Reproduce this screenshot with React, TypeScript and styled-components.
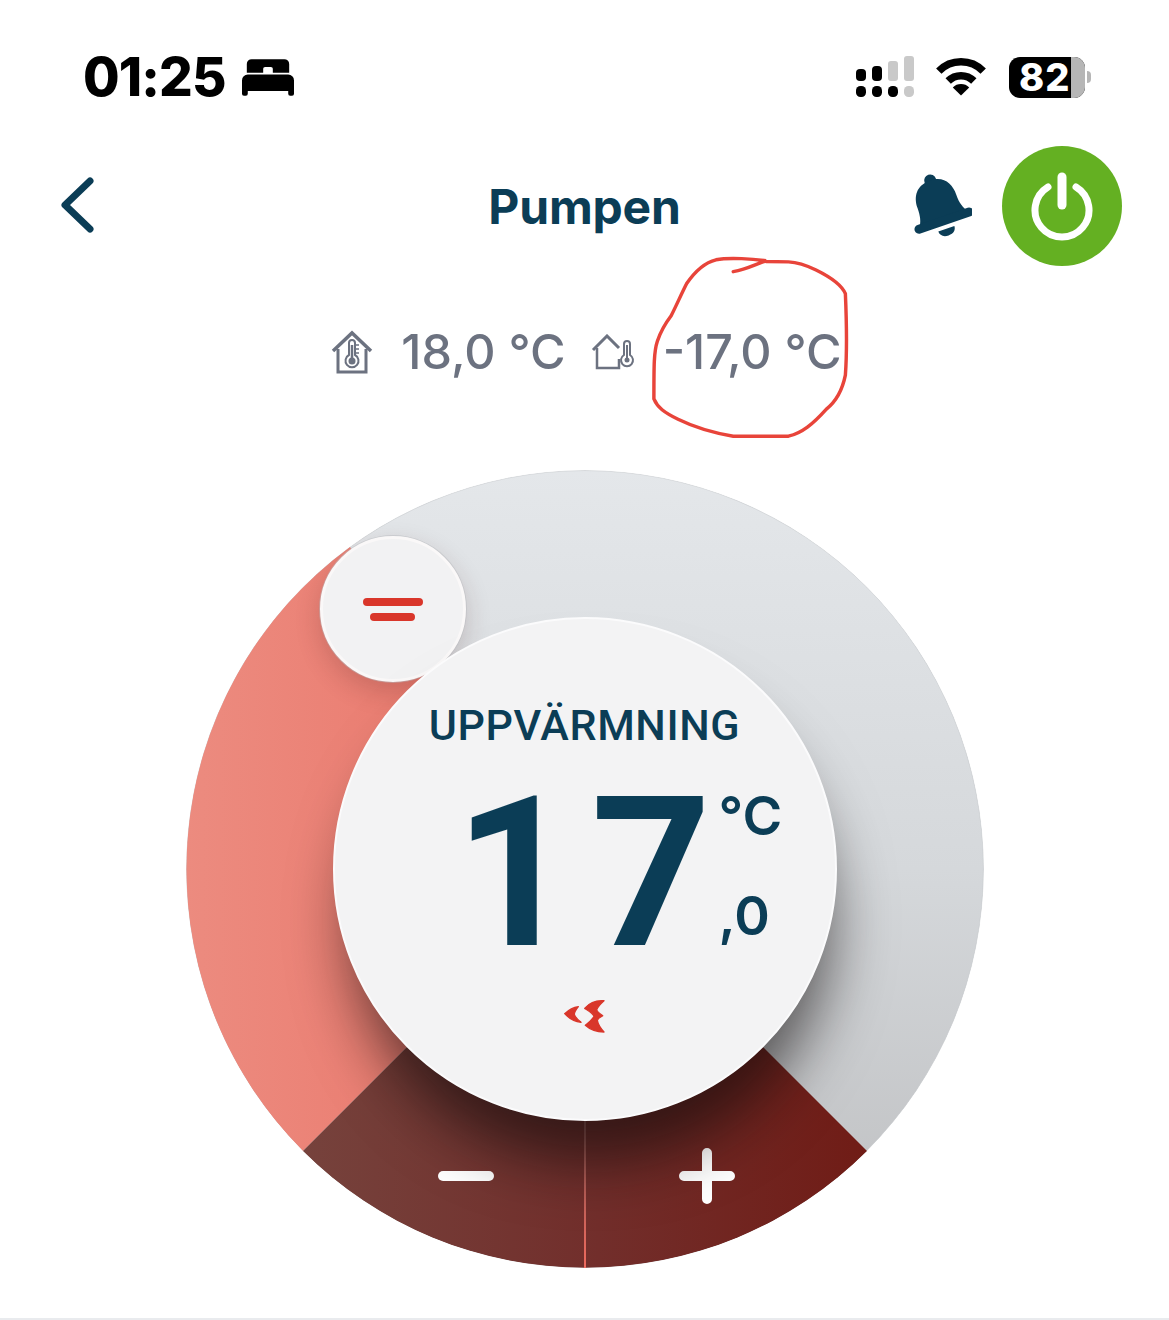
import React from "react";
import styled, { createGlobalStyle } from "styled-components";

const NAVY = "#0b3d56";
const GREY = "#6c7280";
const RED = "#d9362a";

const GlobalStyle = createGlobalStyle`
  html, body { margin: 0; padding: 0; background: #fff; }
  body { font-family: "Inter", "Liberation Sans", sans-serif; }
`;

const Page = styled.div`
  width: 1169px;
  height: 1320px;
  overflow: hidden;
  box-sizing: border-box;
  background: #fff;
  border-bottom: 2px solid #e9ebee;
  display: flex;
  flex-direction: column;
`;

const StatusBar = styled.div`
  height: 146px;
  box-sizing: border-box;
  padding: 46px 78px 0 83px;
  display: flex;
  justify-content: space-between;
  align-items: flex-start;
`;

const TimeGroup = styled.div`
  display: flex;
  align-items: center;
  gap: 16px;
  height: 62px;
`;

const Time = styled.span`
  font-size: 53px;
  font-weight: 800;
  color: #000;
  letter-spacing: -0.9px;
  line-height: 62px;
`;

const Indicators = styled.div`
  display: flex;
  align-items: center;
  gap: 22px;
  height: 62px;
`;

const Battery = styled.div`
  position: relative;
  width: 76px;
  height: 41px;
  border-radius: 11px;
  background: #000;
  display: flex;
  align-items: center;
  padding-left: 10px;
  box-sizing: border-box;
  font-size: 38px;
  font-weight: 800;
  color: #fff;
  letter-spacing: 1px;
`;

const BatteryRest = styled.div`
  position: absolute;
  right: 0;
  top: 0;
  bottom: 0;
  width: 14px;
  background: #b6b6b6;
  border-radius: 0 11px 11px 0;
`;

const BatteryWrap = styled.div`
  display: flex;
  align-items: center;
  gap: 2px;
  margin-left: 1px;
`;

const BatteryTip = styled.div`
  width: 4px;
  height: 12px;
  background: #b6b6b6;
  border-radius: 0 6px 6px 0;
`;

const Header = styled.div`
  height: 120px;
  box-sizing: border-box;
  padding: 0 47px;
  display: grid;
  grid-template-columns: minmax(0, 1fr) auto minmax(0, 1fr);
  align-items: center;
`;

const BackSlot = styled.div`
  display: flex;
  padding-left: 11px;
`;

const Title = styled.h1`
  margin: 0;
  font-size: 48px;
  font-weight: 700;
  color: ${NAVY};
  letter-spacing: -0.2px;
`;

const HeaderActions = styled.div`
  display: flex;
  justify-content: flex-end;
  align-items: center;
  gap: 30px;
`;

const PowerButton = styled.div`
  width: 120px;
  height: 120px;
  flex-shrink: 0;
  border-radius: 50%;
  background: #64b022;
  display: flex;
  align-items: center;
  justify-content: center;
`;

const TempRow = styled.div`
  height: 172px;
  box-sizing: border-box;
  padding-left: 4px;
  display: flex;
  align-items: center;
  justify-content: center;
`;

const TempValue = styled.span`
  position: relative;
  margin-left: 28px;
  font-size: 48.5px;
  font-weight: 550;
  color: ${GREY};
  white-space: nowrap;
  line-height: 60px;
`;

const TempGap = styled.span`
  width: 25px;
`;

const Scribble = styled.svg`
  position: absolute;
  left: -16px;
  top: -69px;
  pointer-events: none;
`;

const DialRow = styled.div`
  margin-top: 32px;
  display: flex;
  justify-content: center;
`;

const Dial = styled.div`
  position: relative;
  width: 798px;
  height: 798px;
  border-radius: 50%;
  overflow: hidden;
`;

const DialFace = styled.svg`
  position: absolute;
  inset: 0;
`;

const Knob = styled.div`
  position: absolute;
  left: 134px;
  top: 66px;
  width: 146px;
  height: 146px;
  box-sizing: border-box;
  border-radius: 50%;
  background: #f2f2f3;
  border: 3px solid #faf8f8;
  box-shadow: 0 0 0 1px rgba(185, 188, 192, 0.5), 0 10px 26px rgba(70, 30, 30, 0.2);
  display: flex;
  flex-direction: column;
  align-items: center;
  justify-content: center;
  gap: 7px;
`;

const KnobBar = styled.div<{ $width: number }>`
  width: ${(p) => p.$width}px;
  height: 8px;
  border-radius: 4px;
  background: ${RED};
`;

const Hub = styled.div`
  position: absolute;
  left: 147px;
  top: 147px;
  width: 504px;
  height: 504px;
  box-sizing: border-box;
  border-radius: 50%;
  background: #f3f3f4;
  border: 2px solid #fbfbfc;
  box-shadow: 6px 52px 60px -12px rgba(15, 10, 10, 0.62);
  display: flex;
  flex-direction: column;
  align-items: center;
  padding-top: 81px;
`;

const Mode = styled.div`
  font-family: "Roboto", sans-serif;
  font-size: 43px;
  font-weight: 500;
  line-height: 50px;
  color: ${NAVY};
  letter-spacing: 0.6px;
`;

const Reading = styled.div`
  margin-top: 48px;
  display: flex;
  align-items: stretch;
  margin-left: 66px;
`;

const Whole = styled.div`
  font-family: "Roboto", sans-serif;
  font-size: 210px;
  font-weight: 700;
  line-height: 150px;
  color: ${NAVY};
`;

const FirstDigit = styled.span`
  margin-right: 16px;
`;

const Side = styled.div`
  display: flex;
  flex-direction: column;
  justify-content: space-between;
  margin: -10px 0 4px 7px;
  font-size: 54px;
  font-weight: 600;
  line-height: 56px;
  color: ${NAVY};
  width: 62px;
`;

const LogoSlot = styled.div`
  margin-top: 51px;
  display: flex;
`;

const BedIcon = () => (
  <svg width="52" height="37" viewBox="0 0 54 38" fill="#000">
    <path fillRule="evenodd" d="M10 0h34a5 5 0 0 1 5 5v9H5V5a5 5 0 0 1 5-5zM24 8a2 2 0 0 0-2 2v4h10v-4a2 2 0 0 0-2-2z" />
    <path d="M6 16h42a6 6 0 0 1 6 6v14a2 2 0 0 1-2 2h-2a2 2 0 0 1-2-2v-3H6v3a2 2 0 0 1-2 2H2a2 2 0 0 1-2-2V22a6 6 0 0 1 6-6z" />
  </svg>
);

const SignalIcon = () => (
  <svg width="58" height="42" viewBox="0 0 58 42">
    <rect x="0" y="13" width="10" height="12" rx="4" fill="#000" />
    <rect x="0" y="30" width="10" height="11" rx="4.500" fill="#000" />
    <rect x="16" y="10" width="10" height="15" rx="4" fill="#000" />
    <rect x="16" y="30" width="10" height="11" rx="4.500" fill="#000" />
    <rect x="32" y="5" width="10" height="20" rx="3" fill="#c9c9c9" />
    <rect x="32" y="30" width="10" height="11" rx="4.500" fill="#000" />
    <rect x="48" y="0" width="10" height="25" rx="3" fill="#c9c9c9" />
    <rect x="48" y="30" width="10" height="11" rx="4.500" fill="#c9c9c9" />
  </svg>
);

const WifiIcon = () => (
  <svg width="50" height="38" viewBox="0 0 50 38" fill="none" stroke="#000" strokeWidth="7.500">
    <path d="M2.800 13.200a31 31 0 0 1 44.400 0" />
    <path d="M12.200 23a18 18 0 0 1 25.600 0" />
    <path d="M16.800 29.500a11.500 11.500 0 0 1 16.400 0L25 37.500z" fill="#000" stroke="none" />
  </svg>
);

const BackIcon = () => (
  <svg width="40" height="60" viewBox="0 0 40 60" fill="none" stroke={NAVY} strokeWidth="7" strokeLinecap="round" strokeLinejoin="round">
    <path d="M32 5 7 29l25 24" />
  </svg>
);

const BellIcon = () => (
  <svg width="66" height="72" viewBox="0 0 66 72" fill={NAVY}>
    <g transform="rotate(-19 33 36)">
      <circle cx="33" cy="9" r="6" />
      <path d="M33 9C18 9 12 19 12 31c0 9-1 14-5 20h52c-4-6-6-11-6-20 0-12-6-22-20-22z" />
      <rect x="2" y="47" width="62" height="9" rx="4.500" />
      <path d="M24 60h17c0 4-3 7-8.500 7S24 64 24 60z" />
    </g>
  </svg>
);

const PowerIcon = () => (
  <svg width="64" height="74" viewBox="0 0 64 74" fill="none" stroke="#fff" strokeLinecap="round">
    <path d="M18 18a27 27 0 1 0 28 0" strokeWidth="7" />
    <path d="M32 8v28" strokeWidth="9" />
  </svg>
);

const IndoorIcon = () => (
  <svg width="42" height="44" viewBox="0 0 42 44" fill="none" stroke={GREY}>
    <path d="M2 21 21 3l19 18" strokeWidth="3.500" />
    <path d="M7 19v23h28V19" strokeWidth="3" />
    <path d="M18 25V13a3 3 0 0 1 6 0v12a6.500 6.500 0 1 1-6 0z" strokeWidth="2" />
    <circle cx="21" cy="31" r="3.500" fill={GREY} stroke="none" />
    <path d="M21 15v15" strokeWidth="2.500" />
    <path d="M25 15h3M25 19h3M25 23h3" strokeWidth="1.500" />
  </svg>
);

const OutdoorIcon = () => (
  <svg width="44" height="36" viewBox="0 0 44 36" fill="none" stroke={GREY}>
    <path d="M2 16 16 2l12 12" strokeWidth="3" />
    <path d="M6 14v20h22v-9" strokeWidth="2.500" />
    <path d="M33 21V10a3 3 0 0 1 6 0v11a6 6 0 1 1-6 0z" strokeWidth="2" />
    <circle cx="36" cy="26" r="2.500" fill={GREY} stroke="none" />
    <path d="M36 11v14" strokeWidth="2" />
  </svg>
);

const LogoIcon = () => (
  <svg width="44" height="36" viewBox="72 56 132 108" fill={RED} stroke={RED} strokeWidth="4" strokeLinejoin="round">
    <path d="M77 100c13-12 27-19 41-21-8 10-12 16-12 23 2 8 10 16 20 24-20-2-37-13-49-26z" />
    <path d="M195 61c-24-2-45 8-58 23 12 8 24 14 28 24-4 10-16 18-26 27 14 13 35 20 56 20-9-10-18-23-20-35 2-8 14-12 16-14-6-4-16-10-18-18 4-10 13-19 22-27z" />
  </svg>
);

export default function App() {
  return (
    <Page>
      <GlobalStyle />
      <StatusBar>
        <TimeGroup>
          <Time>01:25</Time>
          <BedIcon />
        </TimeGroup>
        <Indicators>
          <SignalIcon />
          <WifiIcon />
          <BatteryWrap>
            <Battery>
              82
              <BatteryRest />
            </Battery>
            <BatteryTip />
          </BatteryWrap>
        </Indicators>
      </StatusBar>

      <Header>
        <BackSlot>
          <BackIcon />
        </BackSlot>
        <Title>Pumpen</Title>
        <HeaderActions>
          <BellIcon />
          <PowerButton>
            <PowerIcon />
          </PowerButton>
        </HeaderActions>
      </Header>

      <TempRow>
        <IndoorIcon />
        <TempValue>18,0 °C</TempValue>
        <TempGap />
        <OutdoorIcon />
        <TempValue>
          -17,0 °C
          <Scribble width="207" height="190" viewBox="950 10 600 560" preserveAspectRatio="none" fill="none">
            <path
              d="M1200 65C1240 58 1260 45 1295 33C1260 28 1190 22 1150 30C1110 40 1085 70 1065 100C1050 130 1035 165 1020 195C1005 215 990 240 980 270C970 300 970 340 970 440C980 465 1000 480 1040 500C1080 520 1130 538 1200 550L1360 550C1400 540 1430 515 1470 470C1495 450 1515 420 1525 370C1530 300 1528 200 1525 130C1515 105 1490 85 1440 60C1410 45 1385 37 1360 36L1295 35"
              stroke="#e8443a"
              strokeWidth="10"
              strokeLinecap="round"
            />
          </Scribble>
        </TempValue>
      </TempRow>

      <DialRow>
        <Dial>
          <DialFace width="798" height="798" viewBox="0 0 798 798">
            <defs>
              <linearGradient id="heat" x1="0" y1="0" x2="1" y2="0">
                <stop offset="0" stopColor="#ec8b7f" />
                <stop offset="0.5" stopColor="#eb7f73" />
                <stop offset="1" stopColor="#e96a5f" />
              </linearGradient>
              <linearGradient id="idle" x1="0" y1="0" x2="0" y2="1">
                <stop offset="0" stopColor="#e4e7ea" />
                <stop offset="0.5" stopColor="#d5d8db" />
                <stop offset="1" stopColor="#bdbec0" />
              </linearGradient>
              <linearGradient id="press" x1="0" y1="0" x2="1" y2="0">
                <stop offset="0" stopColor="#76423c" />
                <stop offset="0.5" stopColor="#722f2c" />
                <stop offset="1" stopColor="#701c16" />
              </linearGradient>
              <linearGradient id="seam" x1="0" y1="0" x2="0" y2="1">
                <stop offset="0" stopColor="#8a5552" />
                <stop offset="1" stopColor="#ee6a5e" />
              </linearGradient>
            </defs>
            <circle cx="399" cy="399" r="398.500" fill="url(#idle)" stroke="#c4c8cc" strokeOpacity="0.6" />
            <path d="M399 399 117 681A399 399 0 0 1 164 77Z" fill="url(#heat)" />
            <path d="M399 399 117 681A399 399 0 0 0 681 681Z" fill="url(#press)" />
            <rect x="398" y="640" width="2" height="158" fill="url(#seam)" />
            <path d="M257 706h46" stroke="#fff" strokeWidth="10" strokeLinecap="round" />
            <path d="M498 706h46M521 683v46" stroke="#fff" strokeWidth="10" strokeLinecap="round" />
          </DialFace>
          <Knob>
            <KnobBar $width={60} />
            <KnobBar $width={45} />
          </Knob>
          <Hub>
            <Mode>UPPVÄRMNING</Mode>
            <Reading>
              <Whole>
                <FirstDigit>1</FirstDigit>7
              </Whole>
              <Side>
                <span>°C</span>
                <span>,0</span>
              </Side>
            </Reading>
            <LogoSlot>
              <LogoIcon />
            </LogoSlot>
          </Hub>
        </Dial>
      </DialRow>
    </Page>
  );
}
